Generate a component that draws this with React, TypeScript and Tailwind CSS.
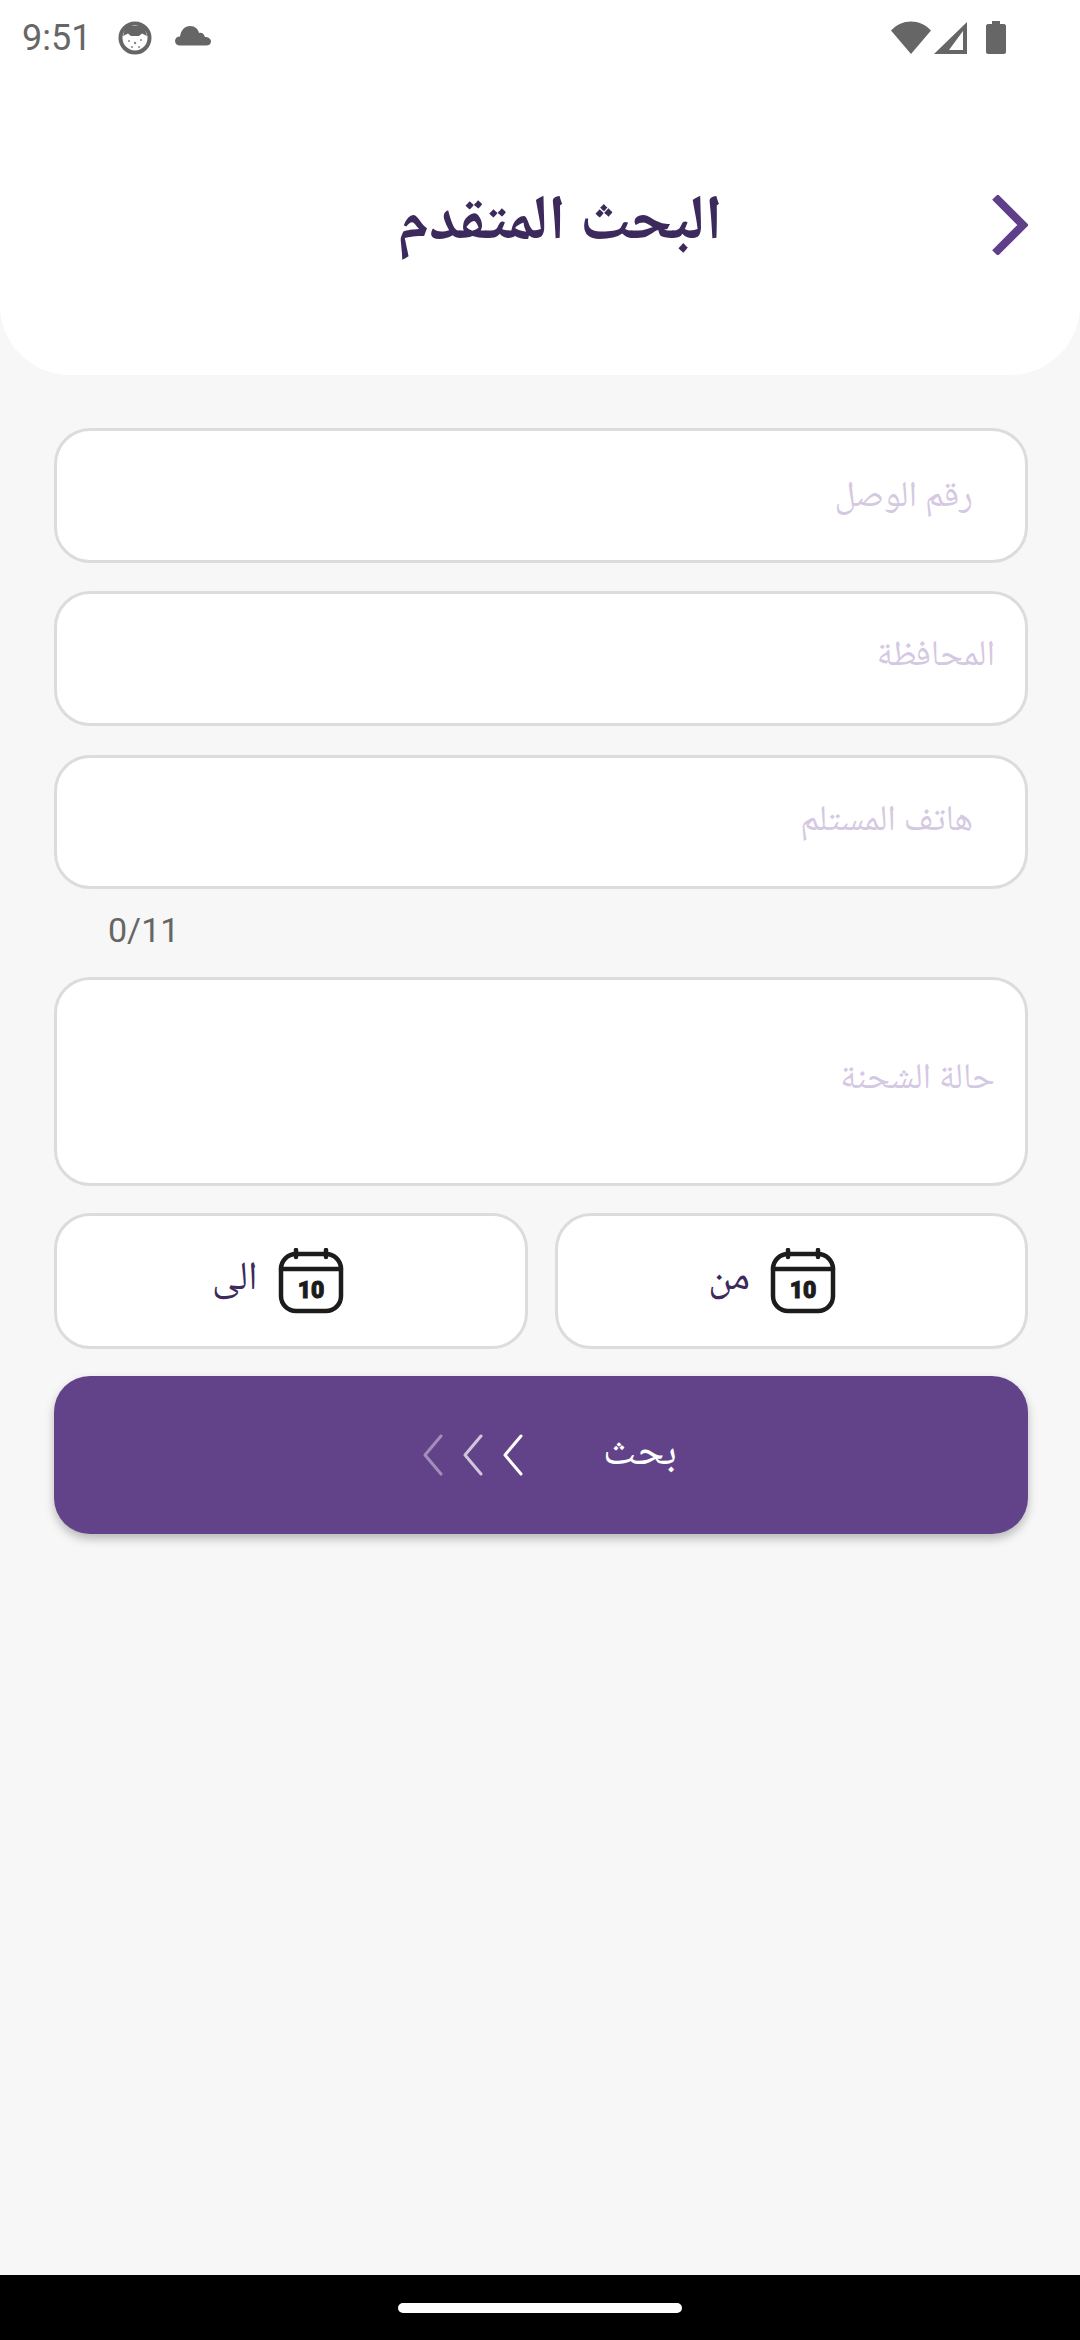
import React from 'react'

const arabic = "font-['Noto_Naskh_Arabic',serif]"

const CalendarIcon = () => (
  <svg width="66" height="66" viewBox="0 0 66 66" fill="none" stroke="#1c1c1c" strokeWidth="4.5" strokeLinecap="round">
    <rect x="3" y="6" width="60" height="57" rx="15" />
    <path d="M3 21H63" />
    <path d="M18 2V9M48 2V9" />
    <text x="33" y="50" textAnchor="middle" fontSize="23" fontWeight="900" fill="#1c1c1c" stroke="#1c1c1c" strokeWidth="1" fontFamily="Roboto, sans-serif">10</text>
  </svg>
)

const Chevron = ({ className }: { className: string }) => (
  <svg width="20" height="42" viewBox="0 0 20 42" fill="none" stroke="white" strokeWidth="3" strokeLinecap="round" strokeLinejoin="round" className={className}>
    <path d="M18 2L2 21L18 40" />
  </svg>
)

const StatusBar = () => (
  <div className="flex h-[75px] items-center justify-between pl-[22px] pr-[74px]">
    <div className="flex items-center">
      <span className="font-['Roboto',sans-serif] text-[36px] leading-none text-[#666666]">9:51</span>
      <svg width="34" height="34" viewBox="0 0 34 34" className="ml-[27px]">
        <circle cx="17" cy="17" r="14.5" fill="white" stroke="#666666" strokeWidth="4" />
        <path d="M5 15L8 5H26L29 15L24 12.5L21 15H13L10 12.5Z" fill="#666666" />
        <g fill="#888888">
          <circle cx="11" cy="20" r="1" /><circle cx="17" cy="22" r="1.2" /><circle cx="23" cy="19" r="1" /><circle cx="14" cy="26" r="1" /><circle cx="21" cy="26" r="1" />
        </g>
      </svg>
      <svg width="36" height="20" viewBox="0 0 36 20" className="ml-[23px] mb-1">
        <path d="M5 19.5C2 19.5 0 17.5 0 15C0 12.5 2 10.5 5 10.5C6 4 10 0 15 0C20 0 23 3 24 7C26 6 29 7 30 11C33.5 11 36 13 36 15.5C36 18 34 19.5 31 19.5Z" fill="#666666" />
      </svg>
    </div>
    <div className="flex items-center">
      <svg width="40" height="33" viewBox="0 0 40 33">
        <path d="M0 9.5C11 -2.5 29 -2.5 40 9.5L20 33Z" fill="#666666" />
      </svg>
      <svg width="33" height="32" viewBox="0 0 33 32" className="ml-[3px]">
        <path fillRule="evenodd" d="M33 0V32H0ZM29 9L15 28H29Z" fill="#666666" />
      </svg>
      <svg width="20" height="33" viewBox="0 0 20 33" className="ml-[19px]">
        <path d="M6 0H14V3H18C19 3 20 4 20 5V31C20 32 19 33 18 33H2C1 33 0 32 0 31V5C0 4 1 3 2 3H6Z" fill="#666666" />
      </svg>
    </div>
  </div>
)

const Field = ({ label, className, textClass }: { label: string; className: string; textClass: string }) => (
  <div dir="rtl" className={`flex items-center rounded-[36px] border-[3px] border-[#dcdcdc] bg-white ${className}`}>
    <span className={`${arabic} leading-none text-[#d4c8e2] ${textClass}`}>{label}</span>
  </div>
)

const DateField = ({ label, className }: { label: string; className: string }) => (
  <div dir="rtl" className={`flex h-[136px] items-center gap-[20px] rounded-[36px] border-[3px] border-[#dcdcdc] bg-white ${className}`}>
    <CalendarIcon />
    <span className={`${arabic} mb-[2px] text-[40px] leading-none text-[#3c2a5c]`}>{label}</span>
  </div>
)

export default function App() {
  return (
    <div className="flex h-[2340px] w-[1080px] flex-col bg-[#f7f7f7]">
      <header className="h-[375px] rounded-b-[70px] bg-white">
        <StatusBar />
        <div className="relative flex h-[300px] items-start justify-center">
          <h1 dir="rtl" className={`${arabic} ml-[40px] mt-[119px] text-[63px] font-bold leading-none text-[#3c2a5c]`}>البحث المتقدم</h1>
          <svg width="36" height="60" viewBox="0 0 36 60" fill="none" className="absolute right-[52px] top-[120px]">
            <path d="M3 2L31 30L3 58" stroke="#5f3f8a" strokeWidth="8" />
          </svg>
        </div>
      </header>

      <main className="flex flex-1 flex-col pl-[54px] pr-[52px] pt-[53px]">
        <Field label="رقم الوصل" className="h-[135px]" textClass="pr-[52px] pt-[6px] text-[36px]" />
        <Field label="المحافظة" className="mt-[28px] h-[135px] pb-[2px]" textClass="pr-[30px] text-[36px]" />
        <Field label="هاتف المستلم" className="mt-[29px] h-[134px] pt-[2px]" textClass="pr-[52px] text-[36px]" />
        <div className="flex h-[88px] items-center pb-[5px] pl-[54px] font-['Roboto',sans-serif] text-[34px] text-[#666666]">0/11</div>
        <Field label="حالة الشحنة" className="h-[209px] pb-[2px]" textClass="pr-[30px] text-[36px]" />
        <div dir="rtl" className="mt-[27px] grid grid-cols-2 gap-[27px]">
          <DateField label="من" className="pr-[189px]" />
          <DateField label="الى" className="pr-[181px]" />
        </div>
        <button className="mt-[27px] flex h-[158px] items-center justify-center rounded-[36px] bg-[#62438a] pl-[18px] shadow-[0_5px_10px_rgba(0,0,0,0.25)]">
          <span className="flex items-center gap-[20px]">
            <Chevron className="opacity-40" />
            <Chevron className="opacity-70" />
            <Chevron className="opacity-100" />
          </span>
          <span dir="rtl" className={`${arabic} ml-[80px] text-[42px] leading-none text-white`}>بحث</span>
        </button>
      </main>

      <div className="flex h-[65px] items-center justify-center bg-black">
        <div className="h-[10px] w-[284px] rounded-full bg-white" />
      </div>
    </div>
  )
}
